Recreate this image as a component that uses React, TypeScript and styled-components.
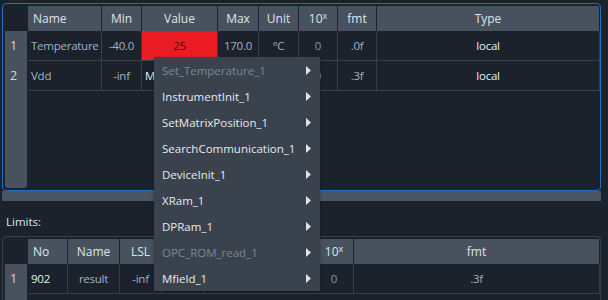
import styled, { createGlobalStyle } from 'styled-components'

type Align = 'left' | 'center'
type Tone = 'muted' | 'bright' | 'number' | 'dim' | 'alert'

type Column = {
  key: string
  title: React.ReactNode
  width: string
  align: Align
}

type Cell = {
  text: string
  align?: Align
  tone?: Tone
}

const GlobalStyle = createGlobalStyle`
  html, body {
    margin: 0;
    padding: 0;
    background: #1b222c;
  }
  body {
    font-family: 'Open Sans', 'Noto Sans', sans-serif;
    font-size: 12px;
  }
`

const Page = styled.div`
  position: relative;
  width: 608px;
  height: 300px;
  overflow: hidden;
  box-sizing: border-box;
  padding: 3px 7px 0 2px;
  display: flex;
  flex-direction: column;
  background: #1b222c;
`

const Panel = styled.div<{ $accent?: boolean; $height: number }>`
  box-sizing: border-box;
  height: ${p => p.$height}px;
  flex-shrink: 0;
  border: 1px solid ${p => (p.$accent ? '#1f70c2' : '#364150')};
  border-radius: 4px;
  padding: 2px 0 2px 2px;
  display: flex;
  gap: 1px;
`

const RowHeads = styled.div`
  width: 22px;
  display: flex;
  flex-direction: column;
`

const Corner = styled.div`
  height: 25px;
  flex-shrink: 0;
`

const HeadStrip = styled.div`
  flex: 1;
  background: #48525f;
  border-radius: 0 0 3px 3px;
`

const RowNumber = styled.div`
  height: 30px;
  line-height: 30px;
  padding-left: 5px;
  color: #d2d9e0;
  font-size: 12.5px;
`

const Table = styled.div`
  flex: 1;
  display: flex;
  flex-direction: column;
`

const HeaderRow = styled.div<{ $cols: string }>`
  display: grid;
  grid-template-columns: ${p => p.$cols};
  height: 25px;
  flex-shrink: 0;
`

const HeaderCell = styled.div<{ $align: Align }>`
  background: #48525f;
  border-right: 1px solid #1b222c;
  color: #dde4eb;
  line-height: 25px;
  text-align: ${p => p.$align};
  padding-left: ${p => (p.$align === 'left' ? '5px' : '0')};
  white-space: nowrap;
  overflow: hidden;
`

const Sup = styled.sup`
  font-size: 9px;
  vertical-align: 4px;
  line-height: 0;
`

const BodyRow = styled.div<{ $cols: string }>`
  display: grid;
  grid-template-columns: ${p => p.$cols};
  height: 30px;
  box-sizing: border-box;
  border-bottom: 1px solid #364150;
  flex-shrink: 0;
`

const toneColor: Record<Tone, string> = {
  muted: '#9fb3c7',
  bright: '#e8edf2',
  number: '#7f99b3',
  dim: '#a4b0bc',
  alert: '#3a1418',
}

const BodyCell = styled.div<{ $align: Align; $tone: Tone }>`
  border-right: 1px solid #364150;
  color: ${p => toneColor[p.$tone]};
  background: ${p => (p.$tone === 'alert' ? '#ec1c24' : 'transparent')};
  font-size: 11.5px;
  letter-spacing: -0.25px;
  line-height: 29px;
  text-align: ${p => p.$align};
  padding-left: ${p => (p.$align === 'left' ? '3px' : '0')};
  white-space: nowrap;
  overflow: hidden;
`

const ScrollTrack = styled.div`
  height: 10px;
  flex-shrink: 0;
  background: #4a5564;
`

const SectionLabel = styled.div`
  height: 35px;
  flex-shrink: 0;
  box-sizing: border-box;
  padding: 13px 0 0 4px;
  color: #dfe5eb;
  font-size: 11.5px;
`

const Menu = styled.div`
  position: absolute;
  left: 154px;
  top: 57px;
  width: 166px;
  background: #3a424e;
  box-shadow: 0 1px 3px rgba(0, 0, 0, 0.35);
`

const MenuItem = styled.div<{ $disabled?: boolean }>`
  height: 26px;
  display: flex;
  align-items: center;
  justify-content: space-between;
  padding: 0 9px 0 8px;
  font-size: 11.5px;
  color: ${p => (p.$disabled ? '#7b8896' : '#e6eaee')};
`

const Arrow = () => (
  <svg width="5" height="9" viewBox="0 0 5 9">
    <polygon points="0,0 5,4.5 0,9" fill="#dfe3e8" />
  </svg>
)

const tenX = (
  <>
    10<Sup>x</Sup>
  </>
)

const paramCols: Column[] = [
  { key: 'name', title: 'Name', width: '74px', align: 'left' },
  { key: 'min', title: 'Min', width: '40px', align: 'center' },
  { key: 'value', title: 'Value', width: '76px', align: 'center' },
  { key: 'max', title: 'Max', width: '41px', align: 'center' },
  { key: 'unit', title: 'Unit', width: '40px', align: 'center' },
  { key: 'exp', title: tenX, width: '39px', align: 'center' },
  { key: 'fmt', title: 'fmt', width: '39px', align: 'center' },
  { key: 'type', title: 'Type', width: '1fr', align: 'center' },
]

// row 2 is being edited: the Value combo shows its popup, which hides Max and Unit
const paramRows: Cell[][] = [
  [
    { text: 'Temperature', tone: 'muted' },
    { text: '-40.0' },
    { text: '25', tone: 'alert' },
    { text: '170.0' },
    { text: '°C' },
    { text: '0', tone: 'number' },
    { text: '.0f' },
    { text: 'local', tone: 'bright' },
  ],
  [
    { text: 'Vdd', tone: 'muted' },
    { text: '-inf' },
    { text: 'M', align: 'left', tone: 'bright' },
    { text: '' },
    { text: '' },
    { text: '0', tone: 'number' },
    { text: '.3f' },
    { text: 'local', tone: 'bright' },
  ],
]

const limitCols: Column[] = [
  { key: 'no', title: 'No', width: '40px', align: 'left' },
  { key: 'name', title: 'Name', width: '52px', align: 'center' },
  { key: 'lsl', title: 'LSL', width: '42px', align: 'center' },
  { key: 'usl', title: '', width: '42px', align: 'center' },
  { key: 'param', title: '', width: '71px', align: 'center' },
  { key: 'unit', title: '', width: '40px', align: 'center' },
  { key: 'exp', title: tenX, width: '39px', align: 'center' },
  { key: 'fmt', title: 'fmt', width: '1fr', align: 'center' },
]

const limitRows: Cell[][] = [
  [
    { text: '902', tone: 'bright' },
    { text: 'result', tone: 'muted' },
    { text: '-inf' },
    { text: '' },
    { text: '' },
    { text: '' },
    { text: '0', tone: 'number' },
    { text: '.3f' },
  ],
]

const menuItems = [
  { label: 'Set_Temperature_1', disabled: true },
  { label: 'InstrumentInit_1' },
  { label: 'SetMatrixPosition_1' },
  { label: 'SearchCommunication_1' },
  { label: 'DeviceInit_1' },
  { label: 'XRam_1' },
  { label: 'DPRam_1' },
  { label: 'OPC_ROM_read_1', disabled: true },
  { label: 'Mfield_1' },
]

function Grid ({ columns, rows }: { columns: Column[]; rows: Cell[][] }) {
  const template = columns.map(c => c.width).join(' ')

  return (
    <>
      <RowHeads>
        <Corner />
        <HeadStrip>
          {rows.map((_, i) => (
            <RowNumber key={i}>{i + 1}</RowNumber>
          ))}
        </HeadStrip>
      </RowHeads>

      <Table>
        <HeaderRow $cols={template}>
          {columns.map(col => (
            <HeaderCell key={col.key} $align={col.align}>{col.title}</HeaderCell>
          ))}
        </HeaderRow>

        {rows.map((row, r) => (
          <BodyRow key={r} $cols={template}>
            {row.map((cell, c) => (
              <BodyCell
                key={columns[c].key}
                $align={cell.align ?? columns[c].align}
                $tone={cell.tone ?? 'dim'}
              >
                {cell.text}
              </BodyCell>
            ))}
          </BodyRow>
        ))}
      </Table>
    </>
  )
}

export default function App () {
  return (
    <Page>
      <GlobalStyle />

      <Panel $accent $height={188}>
        <Grid columns={paramCols} rows={paramRows} />
      </Panel>

      <ScrollTrack />

      <SectionLabel>Limits:</SectionLabel>

      <Panel $height={90}>
        <Grid columns={limitCols} rows={limitRows} />
      </Panel>

      <Menu>
        {menuItems.map(item => (
          <MenuItem key={item.label} $disabled={item.disabled}>
            <span>{item.label}</span>
            <Arrow />
          </MenuItem>
        ))}
      </Menu>
    </Page>
  )
}
